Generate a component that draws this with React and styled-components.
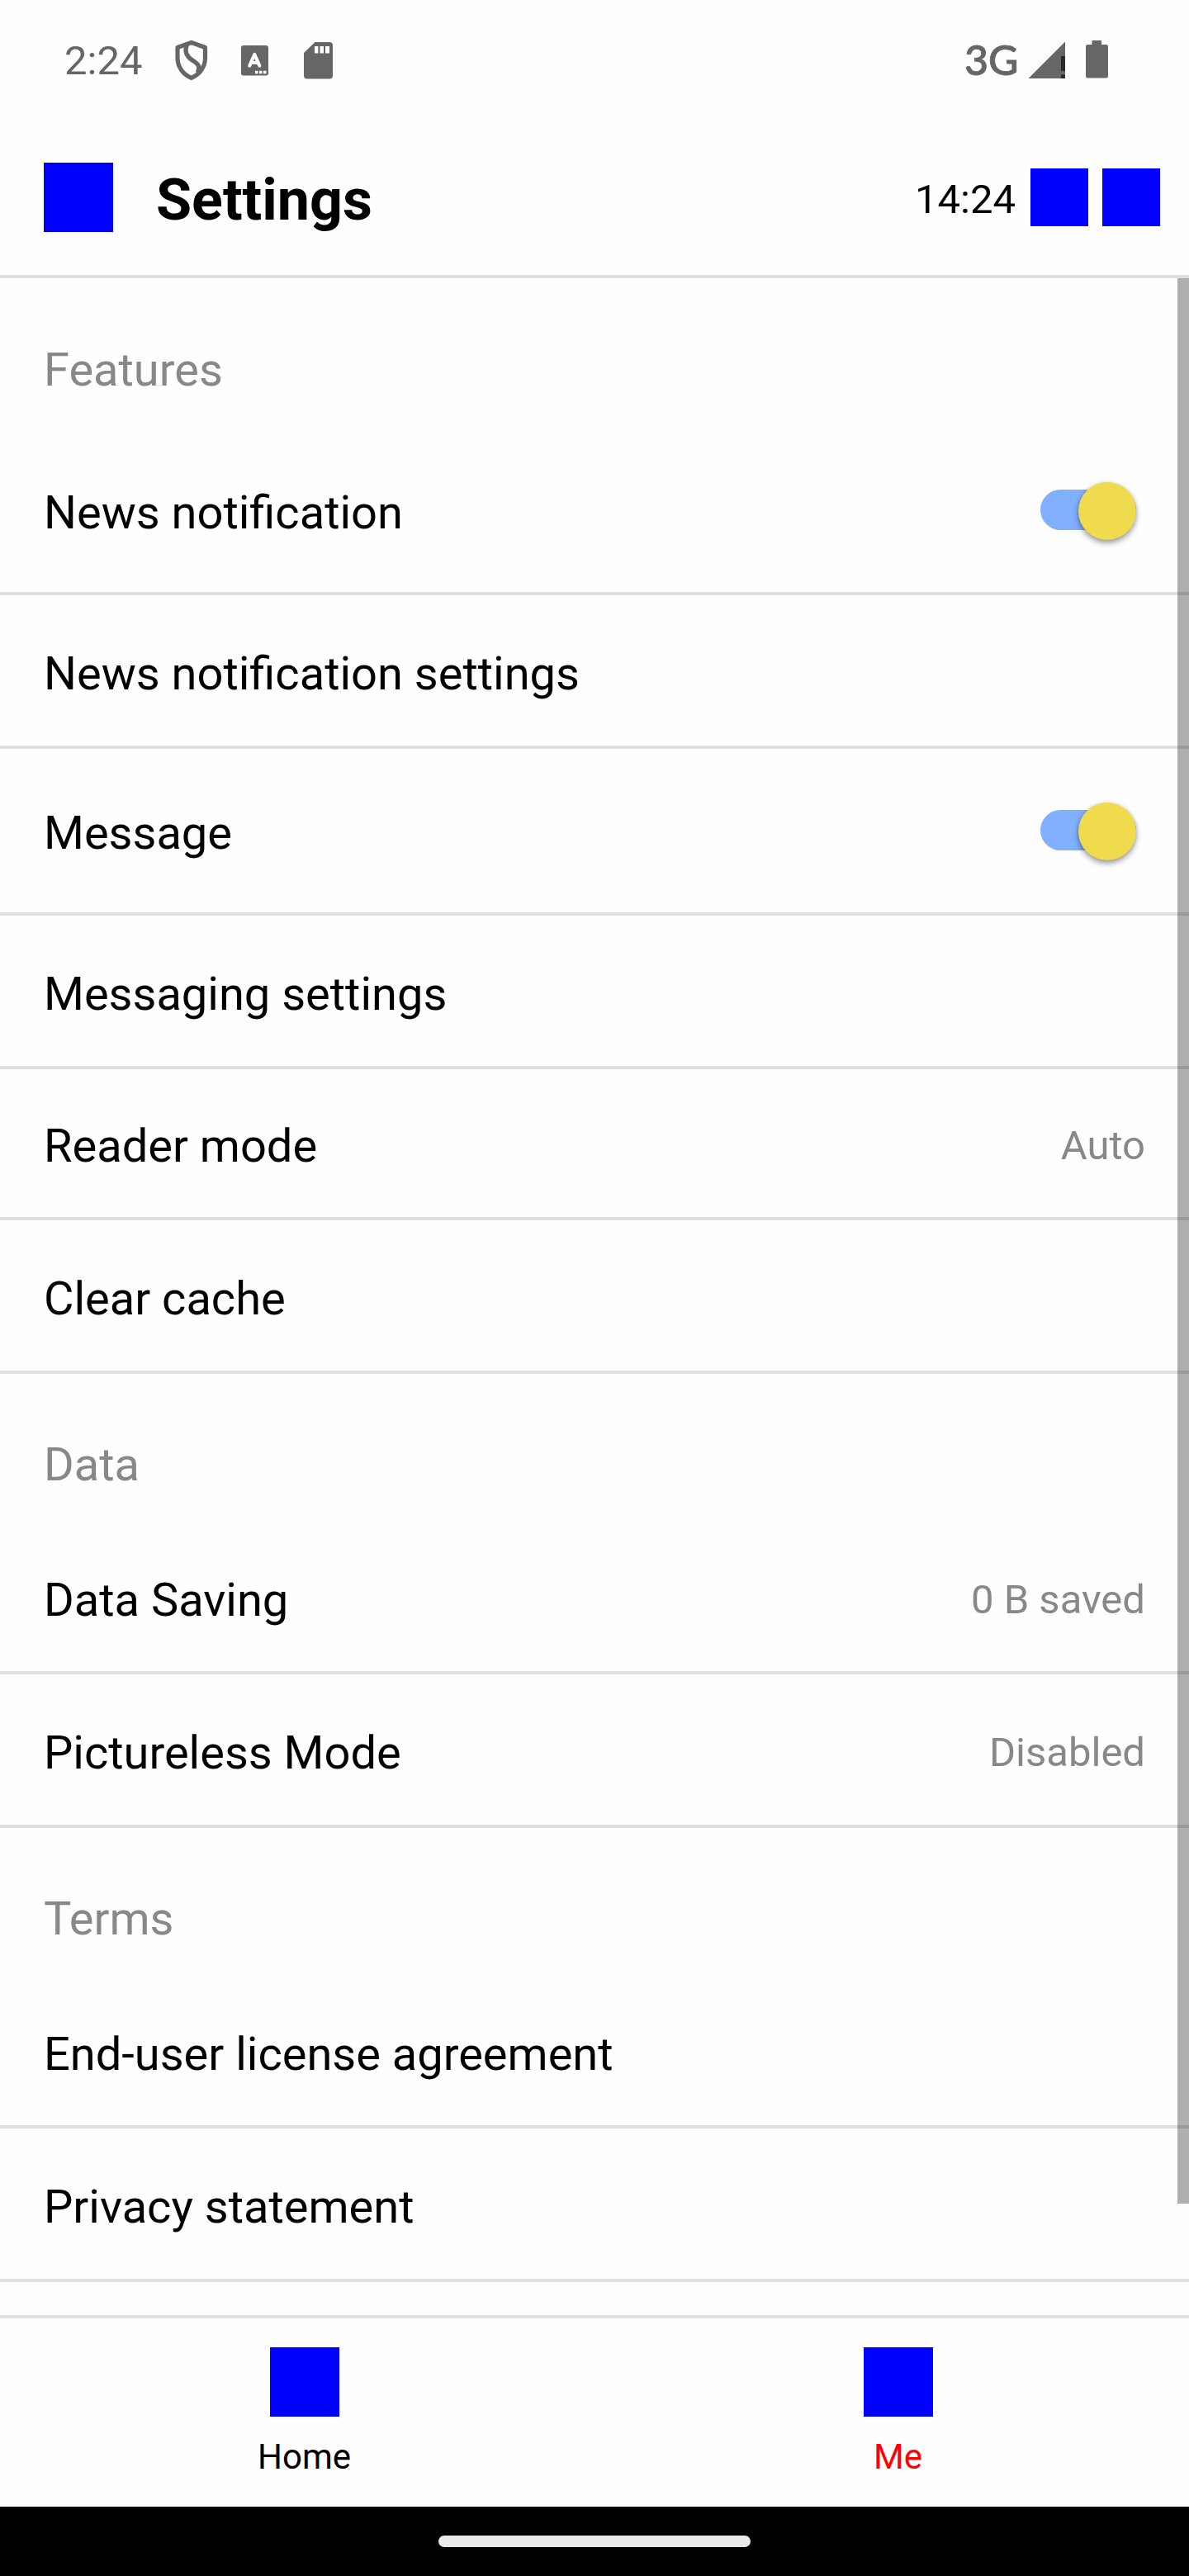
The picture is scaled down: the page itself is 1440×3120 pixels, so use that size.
import React from "react";
import styled, { createGlobalStyle } from "styled-components";

const Global = createGlobalStyle`
  body { margin: 0; background: #fefefe; font-family: Roboto, "Liberation Sans", sans-serif; }
  *, *::before, *::after { box-sizing: border-box; }
`;

const Screen = styled.div`
  width: 1440px;
  height: 3120px;
  display: flex;
  flex-direction: column;
  overflow: hidden;
  background: #fefefe;
  color: #000;
`;

const StatusBar = styled.div`
  height: 145px;
  flex: none;
  display: flex;
  justify-content: space-between;
  padding: 42px 96px 0 78px;
  color: #666;
`;

const StatusGroup = styled.div`
  display: flex;
  align-items: flex-start;
`;

const StatusTime = styled.span`
  width: 132px;
  padding-top: 3px;
  font-size: 49px;
  line-height: 58px;
`;

const Network = styled.span`
  width: 76px;
  padding-top: 1px;
  font-family: Lato, sans-serif;
  font-size: 50px;
  font-weight: 500;
  line-height: 58px;
  -webkit-text-stroke: 0.9px #666;
`;

const Icon = styled.svg`
  display: block;
  height: 60px;
  width: ${(p) => p.$w}px;
  fill: #666;
`;

const Header = styled.header`
  height: 192px;
  flex: none;
  display: flex;
  align-items: center;
  padding: 0 35px 0 53px;
  border-bottom: 4px solid #e0e0e0;
`;

const Square = styled.div`
  flex: none;
  width: ${(p) => p.$size}px;
  height: ${(p) => p.$size}px;
  background: #00f;
`;

const Title = styled.h1`
  flex: 1;
  margin: 6px 0 0 52px;
  font-size: 70px;
  font-weight: 700;
  line-height: 82px;
`;

const HeaderActions = styled.div`
  display: flex;
  align-items: center;
  gap: 17px;
`;

const Clock = styled.span`
  margin: 5px 1px 0 0;
  font-size: 49px;
  line-height: 58px;
`;

const List = styled.main`
  position: relative;
  height: 2467px;
  flex: none;
  overflow: hidden;
`;

const ScrollThumb = styled.div`
  position: absolute;
  top: 0;
  right: 0;
  width: 14px;
  height: 2332px;
  background: rgba(0, 0, 0, 0.31);
`;

const SectionTitle = styled.h2`
  height: ${(p) => p.$h}px;
  margin: 0;
  padding: ${(p) => p.$h - 104}px 53px 0;
  font-size: 56px;
  font-weight: 400;
  line-height: 66px;
  color: #888;
`;

const Row = styled.div`
  height: ${(p) => p.$h}px;
  display: flex;
  align-items: flex-end;
  justify-content: space-between;
  padding: 0 53px ${(p) => (p.$toggle ? 63 : p.$h === 183 ? 53 : 54)}px;
  border-bottom: 4px solid #e0e0e0;
`;

const Label = styled.span`
  font-size: 56px;
  line-height: 66px;
  white-space: nowrap;
`;

const Value = styled.span`
  padding-bottom: 4px;
  font-size: 49px;
  line-height: 58px;
  color: #888;
`;

const Track = styled.div`
  width: 116px;
  height: 49px;
  margin: 0 11px 12px 0;
  border-radius: 25px;
  display: flex;
  align-items: center;
  justify-content: flex-end;
  background: #80b0ff;
`;

const Knob = styled.div`
  width: 70px;
  height: 70px;
  flex: none;
  margin-top: 3px;
  border-radius: 50%;
  background: #f0da4d;
  box-shadow: 0 4px 7px rgba(0, 0, 0, 0.36), 0 0 5px rgba(0, 0, 0, 0.12);
`;

const TabBar = styled.nav`
  height: 232px;
  flex: none;
  display: flex;
  border-top: 4px solid #e0e0e0;
`;

const Tab = styled.div`
  flex: 1;
  display: flex;
  flex-direction: column;
  align-items: center;
  padding-top: 35px;
  padding-left: ${(p) => (p.$active ? 14 : 16)}px;
  gap: 24px;
  font-size: 42px;
  line-height: 50px;
  color: ${(p) => (p.$active ? "#f00" : "#000")};
`;

const SystemBar = styled.div`
  flex: 1;
  display: flex;
  justify-content: center;
  padding-top: 35px;
  background: #000;
`;

const Pill = styled.div`
  width: 378px;
  height: 14px;
  border-radius: 7px;
  background: #ebebeb;
`;

const sections = [
  {
    title: "Features", h: 182, rows: [
      { label: "News notification", toggle: true, h: 202 },
      { label: "News notification settings", h: 186 },
      { label: "Message", toggle: true, h: 202 },
      { label: "Messaging settings", h: 186 },
      { label: "Reader mode", value: "Auto", h: 183 },
      { label: "Clear cache", h: 186 },
    ],
  },
  {
    title: "Data", h: 181, rows: [
      { label: "Data Saving", value: "0 B saved", h: 183 },
      { label: "Pictureless Mode", value: "Disabled", h: 186 },
    ],
  },
  {
    title: "Terms", h: 181, rows: [
      { label: "End-user license agreement", h: 183 },
      { label: "Privacy statement", h: 186 },
    ],
  },
];

export default function App() {
  return (
    <Screen>
      <Global />
      <StatusBar>
        <StatusGroup>
          <StatusTime>2:24</StatusTime>
          <Icon $w={210} viewBox="210 42 210 60">
            <path d="M231.8 51.500 L248.500 57.500 V70 C248.500 81 242 90 231.8 94.300 C221.500 90 215 81 215 70 V57.500 Z" fill="none" stroke="#666" strokeWidth="5.200" strokeLinejoin="round" />
            <path d="M226.500 53.500 C222.500 64 227 69 233 73 C241 78 242.500 81 239.500 88" fill="none" stroke="#666" strokeWidth="5.500" />
            <rect x="292" y="55" width="33" height="36.500" rx="3" />
            <path d="M302.300 79.500 L308.300 66 L314.300 79.500 M304.500 76 H312" fill="none" stroke="#fefefe" strokeWidth="4.200" strokeLinecap="round" strokeLinejoin="round" />
            <path d="M309 85.700h3.500v3.500h-3.500z M314 85.700h3.500v3.500h-3.500z M319 85.700h3.500v3.500h-3.500z" fill="#fefefe" />
            <path fillRule="evenodd" d="M381.500 51 H399 a4 4 0 0 1 4 4 V91.500 a4 4 0 0 1 -4 4 H372 a4 4 0 0 1 -4 -4 V64 Z M381 56v8.500h4.300v-8.500z M387.500 56v8.500h4.500v-8.500z M394 56v8.500h5v-8.500z" />
          </Icon>
        </StatusGroup>
        <StatusGroup>
          <Network>3G</Network>
          <Icon $w={100} viewBox="1244 42 100 60">
            <path d="M1290 50.500 V95 H1245.500 Z" />
            <path d="M1285 68h5v18h-5z M1285 90.500h5v4.500h-5z" fill="#2a2a2a" />
            <path d="M1322.500 49h11.500v5h5.500a2.500 2.500 0 0 1 2.500 2.500v35.500a2.500 2.500 0 0 1 -2.500 2.500h-22a2.500 2.500 0 0 1 -2.500 -2.500v-35.500a2.500 2.500 0 0 1 2.500 -2.500h5z" />
          </Icon>
        </StatusGroup>
      </StatusBar>
      <Header>
        <Square $size={84} />
        <Title>Settings</Title>
        <HeaderActions>
          <Clock>14:24</Clock>
          <Square $size={70} />
          <Square $size={70} />
        </HeaderActions>
      </Header>
      <List>
        {sections.map((s) => (
          <section key={s.title}>
            <SectionTitle $h={s.h}>{s.title}</SectionTitle>
            {s.rows.map((r) => (
              <Row key={r.label} $h={r.h} $toggle={r.toggle}>
                <Label>{r.label}</Label>
                {r.value && <Value>{r.value}</Value>}
                {r.toggle && <Track><Knob /></Track>}
              </Row>
            ))}
          </section>
        ))}
        <ScrollThumb />
      </List>
      <TabBar>
        <Tab><Square $size={84} />Home</Tab>
        <Tab $active><Square $size={84} />Me</Tab>
      </TabBar>
      <SystemBar><Pill /></SystemBar>
    </Screen>
  );
}
